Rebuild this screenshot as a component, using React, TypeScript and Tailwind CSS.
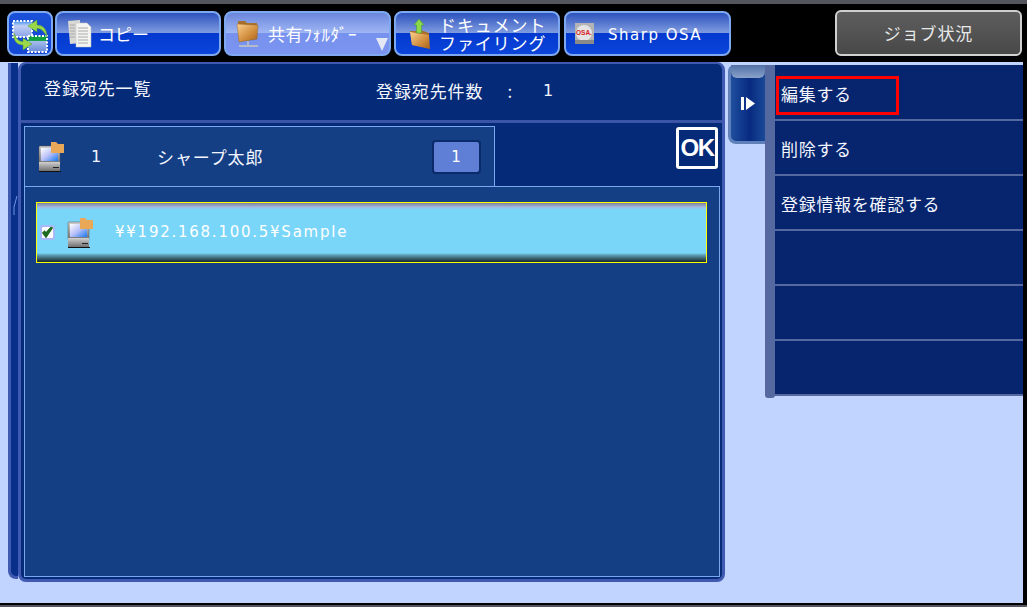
const jp = { fontFamily: '"Noto Sans CJK JP", "Liberation Sans", sans-serif' };

function HomeIcon() {
  return (
    <svg width="38" height="38" viewBox="0 0 38 38">
      <defs>
        <linearGradient id="h1" x1="0" y1="0" x2="0" y2="1"><stop offset="0" stopColor="#3f8ff0" /><stop offset="0.3" stopColor="#c0cef4" /><stop offset="1" stopColor="#8aa4e8" /></linearGradient>
        <linearGradient id="h2" x1="0" y1="0" x2="0" y2="1"><stop offset="0" stopColor="#10a040" /><stop offset="0.28" stopColor="#10a040" /><stop offset="0.3" stopColor="#a8c0ec" /><stop offset="1" stopColor="#6a8ad8" /></linearGradient>
      </defs>
      <rect x="2" y="6" width="19" height="16" fill="url(#h1)" stroke="#fff" strokeWidth="2" strokeDasharray="2 1.5" />
      <rect x="17" y="21" width="19" height="16" fill="url(#h2)" stroke="#fff" strokeWidth="2" strokeDasharray="2 1.5" />
      <path d="M36 22C36 14 32 10 26 10V5L17 11L26 17V13.5C30 13.5 33 16 36 22Z" fill="#9ad848" stroke="#4a9a30" strokeWidth="0.5" />
      <path d="M3 18C2 26 6 30 12 30V35L21 29L12 23V26.5C8 26.5 5 24 3 18Z" fill="#9ad848" stroke="#4a9a30" strokeWidth="0.5" />
    </svg>
  );
}

function DocsIcon() {
  return (
    <svg width="26" height="30" viewBox="0 0 26 30">
      <path d="M1 2L13 1L14 24L3 25Z" fill="#d8d8d4" />
      <path d="M9 4H20L24 8V28H9Z" fill="#f4f4f0" stroke="#c0c0c0" strokeWidth="0.5" />
      <path d="M11 9H21M11 12H21M11 15H21M11 18H21M11 21H21M11 24H21" stroke="#9a9a9a" strokeWidth="0.8" />
      <path d="M3 6H8M3 9H8M3 12H8M3 15H8M3 18H8" stroke="#a0a0a0" strokeWidth="0.8" />
    </svg>
  );
}

function FolderNetIcon() {
  return (
    <svg width="24" height="30" viewBox="0 0 24 30">
      <defs>
        <linearGradient id="f1" x1="0" y1="0" x2="1" y2="1"><stop offset="0" stopColor="#fbd090" /><stop offset="0.6" stopColor="#d08c3c" /><stop offset="1" stopColor="#a8601c" /></linearGradient>
      </defs>
      <path d="M2 2H9L11 4H21V20L3 22Z" fill="#a8702c" />
      <path d="M1 5L22 6L21 20L3 23Z" fill="url(#f1)" stroke="#8a5a20" strokeWidth="0.4" />
      <path d="M12 22V26M3 27H22" stroke="#c8c8c0" strokeWidth="1.4" />
    </svg>
  );
}

function FolderUpIcon() {
  return (
    <svg width="24" height="32" viewBox="0 0 24 32">
      <defs>
        <linearGradient id="f2" x1="0" y1="0" x2="1" y2="1"><stop offset="0" stopColor="#fbd090" /><stop offset="0.6" stopColor="#d08c3c" /><stop offset="1" stopColor="#a8601c" /></linearGradient>
      </defs>
      <path d="M1 13H8L9 11L20 15V30L3 27Z" fill="#a8702c" />
      <path d="M1 14L20 17L21 31L3 27Z" fill="url(#f2)" />
      <path d="M10 1L15 7H12.5V15H7.5V7H5Z" fill="#8cd848" stroke="#3f9a30" strokeWidth="0.5" />
    </svg>
  );
}

function OsaIcon() {
  return (
    <svg width="19" height="21" viewBox="0 0 19 21">
      <rect x="0" y="0" width="19" height="21" fill="#b4b4b4" />
      <circle cx="9" cy="10" r="8" fill="#e4e4e4" />
      <rect x="0" y="17" width="19" height="4" fill="#8a8a8a" />
      <text x="1" y="12" fontSize="6.5" fontWeight="700" fill="#d81c24" fontFamily="Liberation Sans, sans-serif">OSA.</text>
    </svg>
  );
}

function PcFolderIcon() {
  return (
    <svg width="27" height="30" viewBox="0 0 27 30" className="shrink-0">
      <defs>
        <linearGradient id="s1" x1="0" y1="0" x2="1" y2="1"><stop offset="0" stopColor="#ffffff" /><stop offset="0.5" stopColor="#b8c0f8" /><stop offset="1" stopColor="#1878f0" /></linearGradient>
        <linearGradient id="s2" x1="0" y1="0" x2="0" y2="1"><stop offset="0" stopColor="#d0d0d0" /><stop offset="1" stopColor="#707070" /></linearGradient>
      </defs>
      <rect x="1" y="4" width="21" height="18" rx="1" fill="url(#s2)" stroke="#555" strokeWidth="0.5" />
      <rect x="3" y="6" width="17" height="13" fill="url(#s1)" />
      <rect x="1" y="20" width="21" height="9" fill="url(#s2)" />
      <rect x="1" y="29" width="22" height="1" fill="#111" />
      <rect x="15" y="25" width="6" height="1" fill="#222" />
      <path d="M13 0H18L20 2H26V11H13Z" fill="#e8a858" />
    </svg>
  );
}

function TabButton({ selected, icon, children, width }: { selected?: boolean; icon: React.ReactNode; children: React.ReactNode; width: string }) {
  return (
    <div
      className={
        "relative flex h-[45px] items-center rounded-lg border-2 border-[#7ea8f0] text-white " +
        width + " " +
        (selected
          ? "bg-[linear-gradient(#6a86dc_0%,#9fb6f4_48%,#7792ee_50%,#7a94f0_100%)]"
          : "bg-[linear-gradient(#2c52bc_0%,#7f9be0_48%,#0339cf_50%,#0b45da_100%)]")
      }
    >
      {icon}
      {children}
    </div>
  );
}

function MenuRow({ label, active }: { label?: string; active?: boolean }) {
  return (
    <div className="h-[55px] border-b-2 border-[#5568a0] pl-px pt-[10px]">
      <div
        className={
          "flex h-[39px] w-[123px] items-center whitespace-nowrap border-[3px] pb-[4px] pl-[2px] text-[17px] tracking-[0.7px] text-[#f4f6ff] " +
          (active ? "border-[#ff0000]" : "border-transparent")
        }
      >
        {label}
      </div>
    </div>
  );
}

export default function App() {
  return (
    <div className="flex h-[607px] w-[1027px] flex-col overflow-hidden bg-black" style={jp}>
      <div className="h-1 shrink-0 bg-[#55555d]" />
      <header className="flex h-[58px] shrink-0 items-start bg-black pl-[7px] pt-[7px]">
        <div className="flex h-[45px] w-[46px] items-center justify-center rounded-lg border-2 border-[#7ea8f0] bg-[linear-gradient(#1a50d8_0%,#1347d4_100%)]">
          <HomeIcon />
        </div>
        <div className="ml-[2px] flex gap-[3px]">
          <TabButton width="w-[166px]" icon={<span className="ml-[10px] w-[30px]"><DocsIcon /></span>}>
            <span className="ml-[1px] text-[17px]">コピー</span>
          </TabButton>
          <TabButton selected width="w-[167px]" icon={<span className="ml-[10px] w-[32px]"><FolderNetIcon /></span>}>
            <span className="text-[17px] leading-none tracking-[0.6px]">共有ﾌｫﾙﾀﾞｰ</span>
            <svg width="14" height="14" viewBox="0 0 14 14" className="absolute bottom-[3px] right-0">
              <path d="M1 1H13L7 14Z" fill="#e4e8f4" />
            </svg>
          </TabButton>
          <TabButton width="w-[166px]" icon={<span className="ml-[13px] w-[30px]"><FolderUpIcon /></span>}>
            <span className="text-center text-[17px] leading-[18px] tracking-[0.9px]">
              ドキュメント
              <br />
              ファイリング
            </span>
          </TabButton>
          <div className="ml-px">
            <TabButton width="w-[167px]" icon={<span className="ml-[9px] w-[33px]"><OsaIcon /></span>}>
              <span className="pt-[3px] text-[15px] tracking-[1.5px]" style={{ fontFamily: '"DejaVu Sans", sans-serif' }}>Sharp OSA</span>
            </TabButton>
          </div>
        </div>
        <div className="ml-auto mr-[5px] -mt-px flex h-[46px] w-[187px] items-center justify-center rounded-md border-2 border-[#d0d0d0] bg-[linear-gradient(#5e5e5e,#484848)] text-[17px] tracking-[0.9px] text-[#e8e8e8]">
          ジョブ状況
        </div>
      </header>

      <main className="flex flex-1 items-start border-r-4 border-black bg-[#c0d4ff]">
        <div className="relative ml-2 mt-[1px] h-[516px] w-[10px] shrink-0 rounded-bl-lg border-b-[3px] border-l-[3px] border-[#3f5ab0] bg-[#08308a]">
          <svg width="5" height="20" viewBox="0 0 5 20" className="absolute left-[2px] top-[132px]">
            <path d="M4 1L1 12V20" stroke="#6f96e0" fill="none" strokeWidth="1" />
          </svg>
        </div>

        <section className="flex h-[520px] w-[707px] shrink-0 flex-col rounded-b-lg rounded-t-lg border-[3px] border-t-2 border-[#3f5ab0] bg-[#042a78] text-[#f4f6ff]">
          <div className="flex h-[59px] shrink-0 items-center border-b-[3px] border-[#3a55a8] pb-[7px] pl-[23px] text-[17px] tracking-[0.9px]">
            <span className="w-[332px] pb-[2px]">登録宛先一覧</span>
            <span className="pt-[4px]">登録宛先件数</span>
            <span className="ml-[24px] pt-[4px]">:</span>
            <span className="ml-[30px] pt-[4px] text-[16px]" style={{ fontFamily: '"DejaVu Sans", sans-serif' }}>1</span>
          </div>
          <div className="flex flex-1 flex-col pb-[2px] pl-[3px] pr-[2px] pt-[3px]">
            <div className="flex h-[60px] shrink-0">
              <div className="flex h-[61px] w-[471px] items-center border border-b-0 border-[#7aa8f0] bg-[#143f85] pl-[13px] text-[17px] tracking-[0.9px]">
                <PcFolderIcon />
                <span className="ml-[26px] w-[66px] text-[16px]" style={{ fontFamily: '"DejaVu Sans", sans-serif' }}>1</span>
                <span className="w-[275px]">シャープ太郎</span>
                <span className="flex h-[34px] w-[49px] items-center justify-center rounded-[4px] border-2 border-[#0a2a6a] bg-[#5f7fd6] text-[15px] text-white" style={{ fontFamily: '"DejaVu Sans", sans-serif' }}>1</span>
              </div>
              <div className="ml-auto mr-[2px] mt-px flex h-[42px] w-[42px] items-center justify-center rounded-[3px] border-[3px] border-white bg-[#042a78] text-[24px] font-bold leading-none tracking-[-1.5px] text-white" style={{ fontFamily: '"Liberation Sans", sans-serif' }}>
                OK
              </div>
            </div>
            <div className="flex-1 border border-[#7aa8f0] bg-[#143f85] pl-[11px] pr-[12px] pt-[15px]">
              <div className="flex h-[61px] items-center border border-[#ffff00] bg-[linear-gradient(#7c7f9f_0px,#a0b8e0_4px,#7ad6f8_7px,#7ad6f8_50px,#5ea0b8_52px,#3f6a78_55px,#16282e_59px)] pl-[3px]">
                <span className="flex h-[15px] w-[15px] items-center justify-center rounded-[3px] border-2 border-[#a8b8f8] bg-white">
                  <svg width="11" height="11" viewBox="0 0 11 11">
                    <path d="M1 6L4 10L10 1L9 0.5L4 6L2.5 4.5Z" fill="#1f6a1f" stroke="#1f6a1f" strokeWidth="1.6" />
                  </svg>
                </span>
                <span className="ml-[12px]"><PcFolderIcon /></span>
                <span className="ml-[21px] text-[15px] tracking-[1.75px] text-white" style={{ fontFamily: '"DejaVu Sans", "Noto Sans CJK JP", sans-serif' }}>¥¥192.168.100.5¥Sample</span>
              </div>
            </div>
          </div>
        </section>

        <div className="ml-[3px] mt-[3px] flex w-[37px] shrink-0 flex-col items-center">
          <div className="flex h-[79px] w-[37px] flex-col rounded-bl-lg rounded-tl-md border-[3px] border-r-0 border-t-0 border-[#5f80b8] bg-[linear-gradient(90deg,#1f4f9f,#082a80_55%,#1a4a98)]">
            <div className="h-[13px] rounded-b-md bg-[linear-gradient(#5070a8,#8aa2c8)]" />
            <div className="flex flex-1 items-center justify-center gap-[2px] pb-[13px]">
              <span className="h-[13px] w-[3px] bg-white" />
              <svg width="9" height="13" viewBox="0 0 9 13"><path d="M0 0L9 6.5L0 13Z" fill="#fff" /></svg>
            </div>
          </div>
        </div>

        <aside className="mt-[3px] flex flex-1 items-start">
          <div className="h-[333px] w-[10px] shrink-0 rounded-b-[3px] bg-[#5568a0]" />
          <div className="flex-1 bg-[#06256e] pt-px">
            <MenuRow label="編集する" active />
            <MenuRow label="削除する" />
            <div className="h-[55px] border-b-2 border-[#5568a0] pl-px pt-[10px]">
              <div className="flex h-[39px] w-[200px] items-center whitespace-nowrap border-[3px] border-transparent pb-[4px] pl-[2px] text-[17px] tracking-[0.7px] text-[#f4f6ff]">
                登録情報を確認する
              </div>
            </div>
            <MenuRow />
            <MenuRow />
            <MenuRow />
          </div>
        </aside>
      </main>

      <div className="h-[2px] shrink-0 bg-black" />
      <div className="h-[2px] shrink-0 bg-[#55555d]" />
    </div>
  );
}
